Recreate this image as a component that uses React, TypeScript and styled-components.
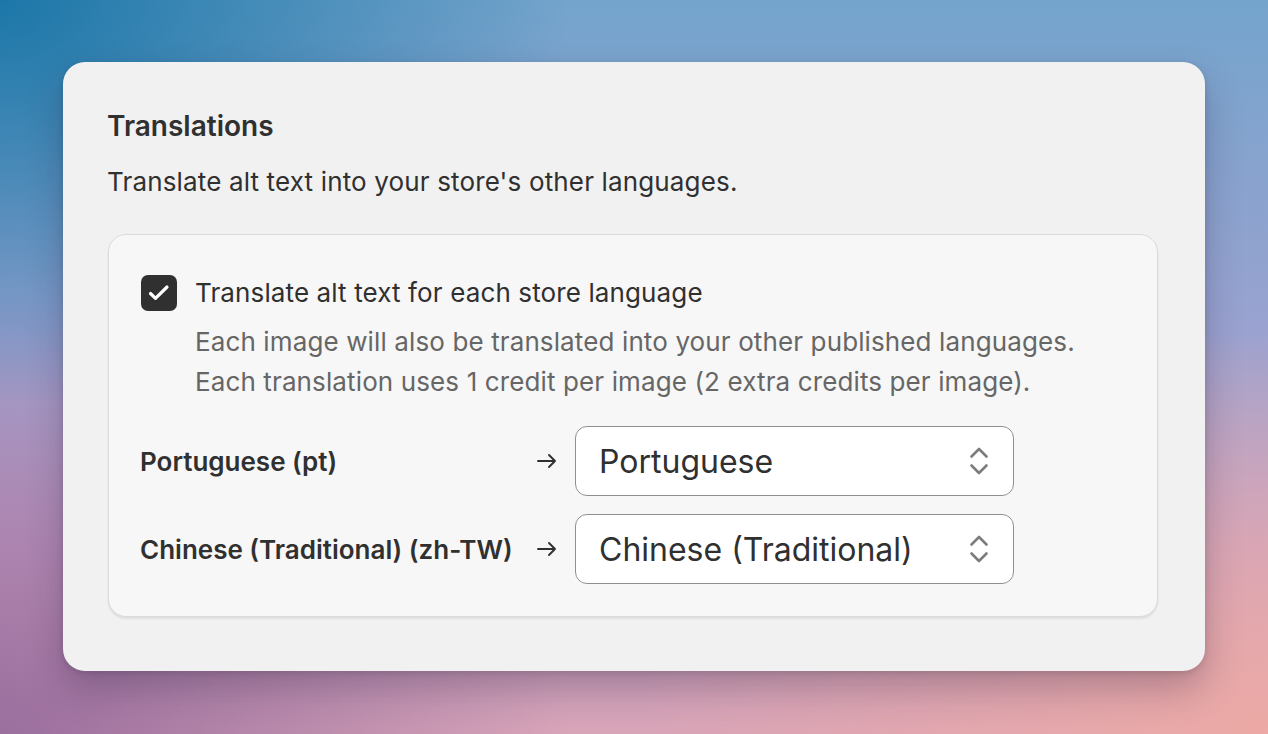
import React, { ReactElement } from "react";
import styled, { createGlobalStyle } from "styled-components";

const GlobalStyle = createGlobalStyle`
  html, body {
    margin: 0;
    padding: 0;
    height: 100%;
  }
  body {
    font-family: Inter, "Noto Sans", "Liberation Sans", sans-serif;
    color: #303030;
    background:
      radial-gradient(ellipse 45% 55% at 0% 0%, #1c77a8 0%, rgba(28, 119, 168, 0) 100%),
      radial-gradient(ellipse 50% 55% at 100% 100%, #eca9a5 0%, rgba(236, 169, 165, 0) 100%),
      radial-gradient(ellipse 45% 60% at 0% 100%, #9a6e9e 0%, rgba(154, 110, 158, 0) 100%),
      linear-gradient(180deg, #74a4cc 0%, #9aa2d0 45%, #c4a2c6 75%, #d8a4b8 100%);
  }
`;

const Page = styled.div`
  width: 1268px;
  height: 734px;
  box-sizing: border-box;
  padding: 62px 63px;
`;

const Card = styled.section`
  box-sizing: border-box;
  height: 609px;
  background: #f1f1f1;
  border-radius: 22px;
  padding: 41px 47px 0 44px;
  box-shadow: 0 18px 36px rgba(40, 30, 60, 0.28), 0 2px 6px rgba(0, 0, 0, 0.12);
`;

const Title = styled.h2`
  margin: 0;
  font-size: 28px;
  line-height: 46px;
  font-weight: 600;
  color: #303030;
`;

const Subtitle = styled.p`
  margin: 13px 0 0;
  font-size: 26px;
  line-height: 40px;
  letter-spacing: 0.15px;
  color: #303030;
`;

const Panel = styled.div`
  margin: 32px 0 0 1px;
  background: #f7f7f7;
  border: 1px solid #dadada;
  border-radius: 18px;
  box-shadow: 0 2px 2px rgba(0, 0, 0, 0.08);
  padding: 40px 32px 32px 31px;
`;

const CheckRow = styled.label`
  display: flex;
  align-items: center;
  gap: 18px;
`;

const CheckBox = styled.span`
  width: 36px;
  height: 36px;
  border-radius: 7px;
  background: #303030;
  display: flex;
  flex-shrink: 0;
  margin-left: 1px;
`;

const CheckLabel = styled.span`
  font-size: 26px;
  line-height: 36px;
  letter-spacing: 0.12px;
  color: #303030;
`;

const Help = styled.p`
  margin: 11px 0 0 55px;
  font-size: 26px;
  line-height: 40px;
  letter-spacing: 0.12px;
  color: #666666;
`;

const Mappings = styled.div`
  margin-top: 24px;
  display: grid;
  grid-template-columns: 396px 39px 439px;
  row-gap: 18px;
  align-items: center;
`;

const SourceLang = styled.span`
  font-size: 26px;
  font-weight: 600;
  color: #303030;
`;

const Arrow = styled.span`
  display: flex;
  align-items: center;
  color: #303030;
`;

const Select = styled.div`
  box-sizing: border-box;
  height: 70px;
  background: #ffffff;
  border: 1px solid #8f8f8f;
  border-radius: 12px;
  display: flex;
  align-items: center;
  justify-content: space-between;
  padding: 0 24px 0 23px;
  font-size: 32px;
  color: #303030;
`;

interface Mapping {
  source: string;
  target: string;
}

const mappings: Mapping[] = [
  { source: "Portuguese (pt)", target: "Portuguese" },
  { source: "Chinese (Traditional) (zh-TW)", target: "Chinese (Traditional)" },
];

const CheckIcon = (): ReactElement => (
  <svg width="36" height="36" viewBox="0 0 36 36" fill="none">
    <path d="M9.5 18.5l5 4.8 11.5-11.3" stroke="#fff" strokeWidth="3.2" strokeLinecap="round" strokeLinejoin="round" />
  </svg>
);

const ArrowIcon = (): ReactElement => (
  <svg width="22" height="22" viewBox="0 0 22 22" fill="none">
    <path d="M2 11h17M13 5l6 6-6 6" stroke="#303030" strokeWidth="1.9" strokeLinecap="round" strokeLinejoin="round" />
  </svg>
);

const UpDownIcon = (): ReactElement => (
  <svg width="20" height="30" viewBox="0 0 20 30" fill="none">
    <path d="M2.5 10.5L10 3l7.5 7.5M2.5 19.5L10 27l7.5-7.5" stroke="#7c7c7c" strokeWidth="2.6" strokeLinecap="round" strokeLinejoin="round" />
  </svg>
);

const App = (): ReactElement => {
  return (
    <>
      <GlobalStyle />
      <Page>
        <Card>
          <Title>Translations</Title>
          <Subtitle>Translate alt text into your store's other languages.</Subtitle>

          <Panel>
            <CheckRow>
              <CheckBox>
                <CheckIcon />
              </CheckBox>
              <CheckLabel>Translate alt text for each store language</CheckLabel>
            </CheckRow>
            <Help>
              Each image will also be translated into your other published languages.
              <br />
              Each translation uses 1 credit per image (2 extra credits per image).
            </Help>

            {/* source language -> store language */}
            <Mappings>
              {mappings.map((m) => (
                <React.Fragment key={m.source}>
                  <SourceLang>{m.source}</SourceLang>
                  <Arrow>
                    <ArrowIcon />
                  </Arrow>
                  <Select>
                    {m.target}
                    <UpDownIcon />
                  </Select>
                </React.Fragment>
              ))}
            </Mappings>
          </Panel>
        </Card>
      </Page>
    </>
  );
};

export default App;
